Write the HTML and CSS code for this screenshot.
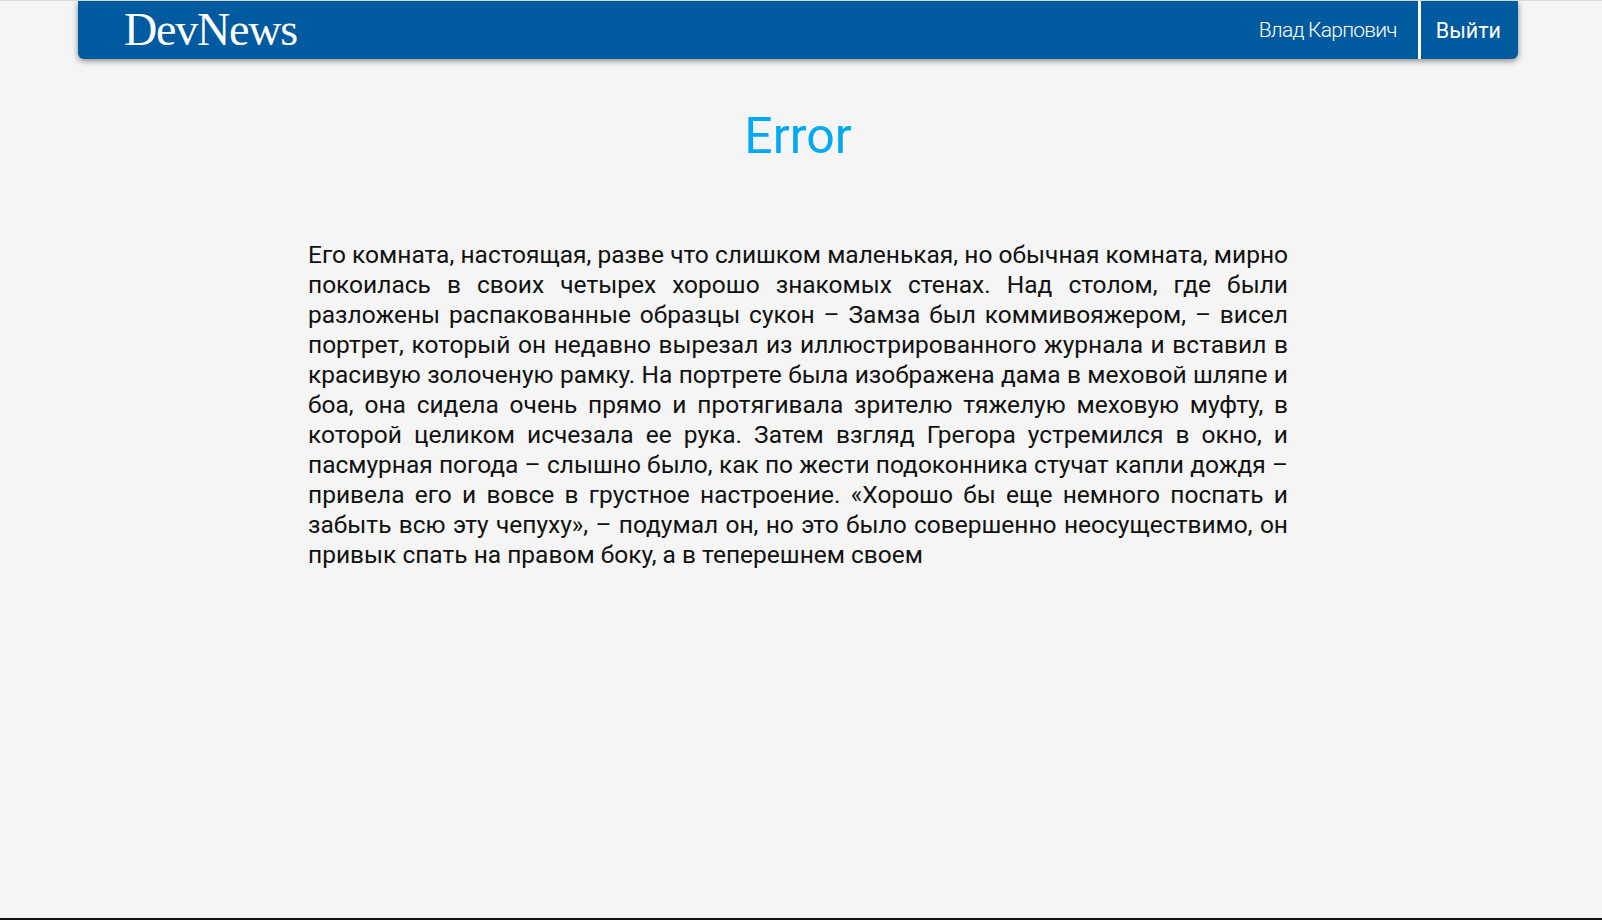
FILE: index.html
```html
<!DOCTYPE html>
<html lang="ru">
<head>
<meta charset="utf-8">
<title>DevNews — Error</title>
<link rel="stylesheet" href="styles.css">
</head>
<body>
<div class="page">
  <header class="topbar">
    <a class="logo" href="#">DevNews</a>
    <nav class="user-nav">
      <span class="user-name">Влад Карпович</span>
      <span class="divider"></span>
      <a class="logout" href="#">Выйти</a>
    </nav>
  </header>
  <main class="content">
    <h1 class="title">Error</h1>
    <p class="text">Его комната, настоящая, разве что слишком маленькая, но обычная комната, мирно покоилась в своих четырех хорошо знакомых стенах. Над столом, где были разложены распакованные образцы сукон – Замза был коммивояжером, – висел портрет, который он недавно вырезал из иллюстрированного журнала и вставил в красивую золоченую рамку. На портрете была изображена дама в меховой шляпе и боа, она сидела очень прямо и протягивала зрителю тяжелую меховую муфту, в которой целиком исчезала ее рука. Затем взгляд Грегора устремился в окно, и пасмурная погода – слышно было, как по жести подоконника стучат капли дождя – привела его и вовсе в грустное настроение. «Хорошо бы еще немного поспать и забыть всю эту чепуху», – подумал он, но это было совершенно неосуществимо, он привык спать на правом боку, а в теперешнем своем</p>
  </main>
</div>
</body>
</html>
```

FILE: styles.css
```css
html {
  background: #0c1116;
  height: 100%;
}
body {
  margin: 0;
  height: 917px;
  background: #f5f5f5;
  border-top: 1px solid #d8d8d8;
  overflow: hidden;
  font-family: Roboto, "Noto Sans", sans-serif;
}
.page {
  width: 1596px;
}
.topbar {
  width: 1440px;
  height: 58px;
  margin-left: 78px;
  background: #005aa0;
  border-radius: 0 0 6px 6px;
  box-shadow: 0 2px 6px rgba(0, 0, 0, 0.45);
  display: flex;
  align-items: center;
  justify-content: space-between;
}
.logo {
  font-family: "Liberation Serif", "Times New Roman", serif;
  font-size: 46px;
  letter-spacing: -1.2px;
  color: #fff;
  text-decoration: none;
  padding-left: 46px;
  line-height: 58px;
}
.user-nav {
  display: flex;
  align-items: stretch;
  height: 100%;
}
.user-name {
  font-weight: 300;
  font-size: 21px;
  letter-spacing: -0.75px;
  color: #fff;
  display: flex;
  align-items: center;
  padding-right: 21px;
}
.divider {
  width: 3px;
  background: #fff;
}
.logout {
  font-size: 21.5px;
  color: #fff;
  text-decoration: none;
  display: flex;
  align-items: center;
  padding: 0 17px 0 15px;
}
.content {
  display: flex;
  flex-direction: column;
  align-items: center;
}
.title {
  margin: 48px 0 0;
  font-weight: 400;
  font-size: 50px;
  color: #03a9f4;
  line-height: normal;
}
.text {
  width: 980px;
  margin: 75px 0 0;
  font-size: 24.5px;
  font-weight: 400;
  line-height: 30px;
  color: #111;
  text-align: justify;
}
```
